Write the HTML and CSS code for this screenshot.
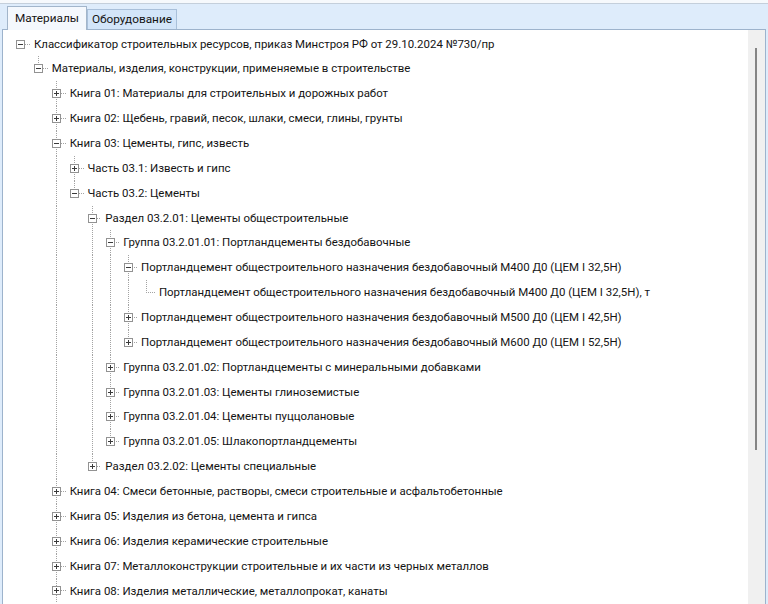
FILE: index.html
```html
<!DOCTYPE html>
<html lang="ru">
<head>
<meta charset="utf-8">
<title>Классификатор</title>
<link rel="stylesheet" href="styles.css">
</head>
<body>
<div class="topband"></div>
<div class="tabs">
  <div class="tab active">Материалы</div>
  <div class="tab">Оборудование</div>
</div>
<div class="panel">
  <div class="tree">
    <div class="row"><span class="cell n-root"><i class="bx minus"></i></span><span class="lbl">Классификатор строительных ресурсов, приказ Минстроя РФ от 29.10.2024 №730/пр</span></div>
    <div class="row"><span class="cell"></span><span class="cell n-t"><i class="bx minus"></i></span><span class="lbl">Материалы, изделия, конструкции, применяемые в строительстве</span></div>
    <div class="row"><span class="cell"></span><span class="cell"></span><span class="cell n-tb"><i class="bx plus"></i></span><span class="lbl">Книга 01: Материалы для строительных и дорожных работ</span></div>
    <div class="row"><span class="cell"></span><span class="cell"></span><span class="cell n-tb"><i class="bx plus"></i></span><span class="lbl">Книга 02: Щебень, гравий, песок, шлаки, смеси, глины, грунты</span></div>
    <div class="row"><span class="cell"></span><span class="cell"></span><span class="cell n-tb"><i class="bx minus"></i></span><span class="lbl">Книга 03: Цементы, гипс, известь</span></div>
    <div class="row"><span class="cell"></span><span class="cell"></span><span class="cell v"></span><span class="cell n-tb"><i class="bx plus"></i></span><span class="lbl">Часть 03.1: Известь и гипс</span></div>
    <div class="row"><span class="cell"></span><span class="cell"></span><span class="cell v"></span><span class="cell n-t"><i class="bx minus"></i></span><span class="lbl">Часть 03.2: Цементы</span></div>
    <div class="row"><span class="cell"></span><span class="cell"></span><span class="cell v"></span><span class="cell"></span><span class="cell n-tb"><i class="bx minus"></i></span><span class="lbl">Раздел 03.2.01: Цементы общестроительные</span></div>
    <div class="row"><span class="cell"></span><span class="cell"></span><span class="cell v"></span><span class="cell"></span><span class="cell v"></span><span class="cell n-tb"><i class="bx minus"></i></span><span class="lbl">Группа 03.2.01.01: Портландцементы бездобавочные</span></div>
    <div class="row"><span class="cell"></span><span class="cell"></span><span class="cell v"></span><span class="cell"></span><span class="cell v"></span><span class="cell v"></span><span class="cell n-tb"><i class="bx minus"></i></span><span class="lbl">Портландцемент общестроительного назначения бездобавочный М400 Д0 (ЦЕМ I 32,5Н)</span></div>
    <div class="row"><span class="cell"></span><span class="cell"></span><span class="cell v"></span><span class="cell"></span><span class="cell v"></span><span class="cell v"></span><span class="cell v"></span><span class="cell n-t"></span><span class="lbl">Портландцемент общестроительного назначения бездобавочный М400 Д0 (ЦЕМ I 32,5Н), т</span></div>
    <div class="row"><span class="cell"></span><span class="cell"></span><span class="cell v"></span><span class="cell"></span><span class="cell v"></span><span class="cell v"></span><span class="cell n-tb"><i class="bx plus"></i></span><span class="lbl">Портландцемент общестроительного назначения бездобавочный М500 Д0 (ЦЕМ I 42,5Н)</span></div>
    <div class="row"><span class="cell"></span><span class="cell"></span><span class="cell v"></span><span class="cell"></span><span class="cell v"></span><span class="cell v"></span><span class="cell n-t"><i class="bx plus"></i></span><span class="lbl">Портландцемент общестроительного назначения бездобавочный М600 Д0 (ЦЕМ I 52,5Н)</span></div>
    <div class="row"><span class="cell"></span><span class="cell"></span><span class="cell v"></span><span class="cell"></span><span class="cell v"></span><span class="cell n-tb"><i class="bx plus"></i></span><span class="lbl">Группа 03.2.01.02: Портландцементы с минеральными добавками</span></div>
    <div class="row"><span class="cell"></span><span class="cell"></span><span class="cell v"></span><span class="cell"></span><span class="cell v"></span><span class="cell n-tb"><i class="bx plus"></i></span><span class="lbl">Группа 03.2.01.03: Цементы глиноземистые</span></div>
    <div class="row"><span class="cell"></span><span class="cell"></span><span class="cell v"></span><span class="cell"></span><span class="cell v"></span><span class="cell n-tb"><i class="bx plus"></i></span><span class="lbl">Группа 03.2.01.04: Цементы пуццолановые</span></div>
    <div class="row"><span class="cell"></span><span class="cell"></span><span class="cell v"></span><span class="cell"></span><span class="cell v"></span><span class="cell n-t"><i class="bx plus"></i></span><span class="lbl">Группа 03.2.01.05: Шлакопортландцементы</span></div>
    <div class="row"><span class="cell"></span><span class="cell"></span><span class="cell v"></span><span class="cell"></span><span class="cell n-t"><i class="bx plus"></i></span><span class="lbl">Раздел 03.2.02: Цементы специальные</span></div>
    <div class="row"><span class="cell"></span><span class="cell"></span><span class="cell n-tb"><i class="bx plus"></i></span><span class="lbl">Книга 04: Смеси бетонные, растворы, смеси строительные и асфальтобетонные</span></div>
    <div class="row"><span class="cell"></span><span class="cell"></span><span class="cell n-tb"><i class="bx plus"></i></span><span class="lbl">Книга 05: Изделия из бетона, цемента и гипса</span></div>
    <div class="row"><span class="cell"></span><span class="cell"></span><span class="cell n-tb"><i class="bx plus"></i></span><span class="lbl">Книга 06: Изделия керамические строительные</span></div>
    <div class="row"><span class="cell"></span><span class="cell"></span><span class="cell n-tb"><i class="bx plus"></i></span><span class="lbl">Книга 07: Металлоконструкции строительные и их части из черных металлов</span></div>
    <div class="row"><span class="cell"></span><span class="cell"></span><span class="cell n-tb"><i class="bx plus"></i></span><span class="lbl">Книга 08: Изделия металлические, металлопрокат, канаты</span></div>
  </div>
  <div class="sb"><div class="thumb"></div></div>
</div>
</body>
</html>
```

FILE: styles.css
```css
html, body {
  margin: 0;
  padding: 0;
  height: 100%;
  overflow: hidden;
}
body {
  background: #deecfb;
  font-family: Roboto, "Noto Sans", "DejaVu Sans", sans-serif;
  font-size: 11.45px;
  color: #141414;
}
.topband {
  height: 3px;
  background: #f6f9fc;
  border-bottom: 1px solid #c4cfdb;
}
.tabs {
  display: flex;
  align-items: flex-end;
  height: 25px;
  padding-left: 7px;
  font-size: 11.8px;
}
.tab {
  box-sizing: border-box;
  height: 20px;
  padding: 0 4px;
  line-height: 19px;
  background: #d3e5f9;
  border: 1px solid #a9c0da;
  border-bottom: none;
}
.tab.active {
  height: 24px;
  line-height: 23px;
  padding: 0 7px 0 7px;
  background: #f4f8fd;
  border-color: #a2b5ca;
  margin-bottom: -1px;
  position: relative;
  z-index: 1;
}
.panel {
  display: flex;
  margin-left: 2px;
  width: 764px;
  box-sizing: border-box;
  height: 580px;
  border: 1px solid #9db3cc;
  border-bottom: none;
  background: #fff;
}
.tree {
  flex: 1;
  overflow: hidden;
  padding: 1.6px 0 0 9.07px;
  background: #fff;
}
.row {
  display: flex;
  height: 24.86px;
  white-space: nowrap;
}
.cell {
  flex: none;
  width: 17.86px;
  display: flex;
  align-items: center;
  justify-content: center;
}
.cell.v {
  background: repeating-linear-gradient(to bottom, #a3a3a3 0 1px, transparent 1px 2px) center top / 1px 100% no-repeat;
}
.cell.n-tb {
  background:
    repeating-linear-gradient(to bottom, #a3a3a3 0 1px, transparent 1px 2px) center top / 1px 100% no-repeat,
    repeating-linear-gradient(to right, #a3a3a3 0 1px, transparent 1px 2px) right center / 50% 1px no-repeat;
}
.cell.n-t {
  background:
    repeating-linear-gradient(to bottom, #a3a3a3 0 1px, transparent 1px 2px) center top / 1px 50% no-repeat,
    repeating-linear-gradient(to right, #a3a3a3 0 1px, transparent 1px 2px) right center / 50% 1px no-repeat;
}
.cell.n-root {
  background: repeating-linear-gradient(to right, #a3a3a3 0 1px, transparent 1px 2px) right center / 50% 1px no-repeat;
}
.bx {
  display: block;
  width: 9px;
  height: 9px;
  box-sizing: border-box;
  border: 1px solid #929292;
}
.bx.minus {
  background: linear-gradient(#3a3a3a, #3a3a3a) center / 5px 1px no-repeat, #fff;
}
.bx.plus {
  background:
    linear-gradient(#3a3a3a, #3a3a3a) center / 5px 1px no-repeat,
    linear-gradient(#3a3a3a, #3a3a3a) center / 1px 5px no-repeat,
    #fff;
}
.lbl {
  margin-left: 4px;
  line-height: 24.86px;
}
.sb {
  flex: none;
  width: 17px;
  background: #f0f0f0;
  padding-top: 18px;
  box-sizing: border-box;
}
.thumb {
  width: 2px;
  height: 402px;
  margin-left: 7px;
  background: #858585;
}
```
